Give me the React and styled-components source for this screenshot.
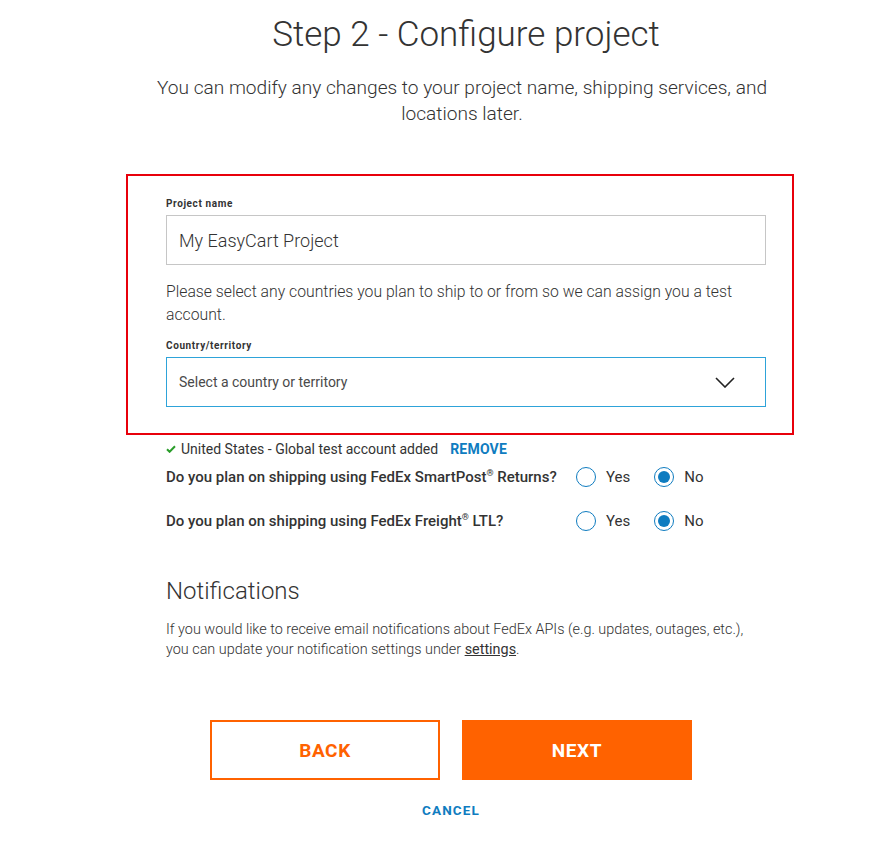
import React, { useState } from "react";
import styled, { createGlobalStyle } from "styled-components";

const GlobalStyle = createGlobalStyle`
  html, body {
    margin: 0;
    padding: 0;
    background: #ffffff;
  }
  body {
    font-family: "Roboto", "Liberation Sans", Arial, sans-serif;
    color: #333333;
  }
`;

// layout
const Page = styled.div`
  width: 879px;
  min-height: 844px;
  box-sizing: border-box;
  padding: 14px 0 30px 126px;
`;

const Header = styled.header`
  width: 680px;
  text-align: center;
`;

const Title = styled.h1`
  margin: 0;
  font-size: 35px;
  font-weight: 300;
  line-height: 42px;
  color: #333333;
`;

const Subtitle = styled.p`
  margin: 19px 0 0 16px;
  width: 640px;
  font-size: 19.1px;
  font-weight: 300;
  line-height: 26px;
  color: #333333;
`;

const Highlight = styled.section`
  margin-top: 47px;
  width: 668px;
  box-sizing: border-box;
  border: 2px solid #e8000b;
  padding: 22px 26px 26px 38px;
`;

const Body = styled.div`
  padding-left: 40px;
  width: 600px;
`;

const Label = styled.label`
  display: block;
  font-size: 10px;
  font-weight: 700;
  letter-spacing: 0.6px;
  line-height: 12px;
  color: #333333;
  margin-bottom: 5px;
`;

const TextInput = styled.input`
  display: block;
  width: 100%;
  height: 50px;
  box-sizing: border-box;
  border: 1px solid #c6c6c6;
  padding: 0 12px;
  font-family: "Roboto", sans-serif;
  font-size: 18px;
  font-weight: 300;
  color: #333333;
  outline: none;
`;

const HelpText = styled.p`
  margin: 15px 0 14px;
  font-size: 15.75px;
  font-weight: 300;
  line-height: 23px;
  color: #333333;
`;

const SelectBox = styled.div`
  display: flex;
  align-items: center;
  justify-content: space-between;
  height: 50px;
  box-sizing: border-box;
  border: 1px solid #2ea3d9;
  padding: 0 30px 0 12px;
  font-size: 14px;
  font-weight: 400;
  color: #4a4a4a;
`;

const Added = styled.div`
  display: flex;
  align-items: center;
  margin-top: 5px;
  font-size: 14px;
  font-weight: 400;
  color: #333333;
  line-height: 18px;
`;

const Remove = styled.a`
  margin-left: 12px;
  font-size: 14px;
  font-weight: 700;
  color: #0f7cc0;
  text-decoration: none;
  letter-spacing: 0.2px;
`;

const Question = styled.div`
  display: flex;
  align-items: center;
  margin-top: ${(p) => p.$top}px;
  height: 24px;
`;

const QuestionText = styled.div`
  width: 410px;
  font-size: 15px;
  font-weight: 500;
  color: #333333;
  sup {
    font-size: 9px;
    line-height: 0;
  }
`;

const RadioGroup = styled.div`
  display: flex;
  align-items: center;
  gap: 24px;
`;

const RadioOption = styled.label`
  display: flex;
  align-items: center;
  gap: 10px;
  font-size: 15px;
  font-weight: 400;
  color: #333333;
  cursor: pointer;
`;

const RadioDot = styled.span`
  width: 20px;
  height: 20px;
  box-sizing: border-box;
  border-radius: 50%;
  border: 1.5px solid #0f7cc0;
  display: flex;
  align-items: center;
  justify-content: center;
  &::after {
    content: "";
    width: 12px;
    height: 12px;
    border-radius: 50%;
    background: #0f7cc0;
    display: ${(p) => (p.$checked ? "block" : "none")};
  }
`;

const SectionTitle = styled.h2`
  margin: 43px 0 0;
  font-size: 24px;
  font-weight: 300;
  line-height: 30px;
  color: #333333;
`;

const Paragraph = styled.p`
  margin: 14px 0 0;
  width: 590px;
  font-size: 14.4px;
  font-weight: 300;
  line-height: 20px;
  color: #333333;
  a {
    color: #333333;
    font-weight: 400;
    text-decoration: underline;
  }
`;

const Actions = styled.div`
  display: flex;
  gap: 22px;
  margin: 60px 0 0 44px;
`;

const Button = styled.button`
  width: 230px;
  height: 60px;
  box-sizing: border-box;
  border: 2px solid #ff6200;
  background: ${(p) => (p.$primary ? "#ff6200" : "#ffffff")};
  color: ${(p) => (p.$primary ? "#ffffff" : "#ff6200")};
  font-family: "Roboto", sans-serif;
  font-size: 19px;
  font-weight: 700;
  letter-spacing: 0.6px;
  cursor: pointer;
`;

const Cancel = styled.a`
  display: block;
  width: 482px;
  margin: 22px 0 0 44px;
  text-align: center;
  font-size: 13.5px;
  font-weight: 700;
  letter-spacing: 1.1px;
  color: #0f7cc0;
  text-decoration: none;
`;

const Chevron = () => (
  <svg width="20" height="11" viewBox="0 0 20 11" fill="none">
    <path d="M1 1l9 9 9-9" stroke="#222" strokeWidth="1.6" />
  </svg>
);

const Check = () => (
  <svg width="10" height="8" viewBox="0 0 10 8" style={{ marginRight: 5 }}>
    <path d="M1 4.2l2.6 2.6L9 1.3" stroke="#2a9d2a" strokeWidth="2" fill="none" />
  </svg>
);

const Radio = ({ value, checked, onChange, children }) => (
  <RadioOption onClick={() => onChange(value)}>
    <RadioDot $checked={checked} />
    {children}
  </RadioOption>
);

const YesNo = ({ value, onChange }) => (
  <RadioGroup>
    <Radio value="yes" checked={value === "yes"} onChange={onChange}>
      Yes
    </Radio>
    <Radio value="no" checked={value === "no"} onChange={onChange}>
      No
    </Radio>
  </RadioGroup>
);

export default function App() {
  const [smartPost, setSmartPost] = useState("no");
  const [freight, setFreight] = useState("no");

  return (
    <Page>
      <GlobalStyle />
      <Header>
        <Title>Step 2 - Configure project</Title>
        <Subtitle>
          You can modify any changes to your project name, shipping services,
          and locations later.
        </Subtitle>
      </Header>

      <Highlight>
        <Label>Project name</Label>
        <TextInput defaultValue="My EasyCart Project" />
        <HelpText>
          Please select any countries you plan to ship to or from so we can
          assign you a test account.
        </HelpText>
        <Label>Country/territory</Label>
        <SelectBox>
          <span>Select a country or territory</span>
          <Chevron />
        </SelectBox>
      </Highlight>

      <Body>
        <Added>
          <Check />
          United States - Global test account added
          <Remove href="#">REMOVE</Remove>
        </Added>
        <Question $top={7}>
          <QuestionText>
            Do you plan on shipping using FedEx SmartPost<sup>®</sup> Returns?
          </QuestionText>
          <YesNo value={smartPost} onChange={setSmartPost} />
        </Question>
        <Question $top={20}>
          <QuestionText>
            Do you plan on shipping using FedEx Freight<sup>®</sup> LTL?
          </QuestionText>
          <YesNo value={freight} onChange={setFreight} />
        </Question>

        <SectionTitle>Notifications</SectionTitle>
        <Paragraph>
          If you would like to receive email notifications about FedEx APIs
          (e.g. updates, outages, etc.), you can update your notification
          settings under <a href="#">settings</a>.
        </Paragraph>

        <Actions>
          <Button>BACK</Button>
          <Button $primary>NEXT</Button>
        </Actions>
        <Cancel href="#">CANCEL</Cancel>
      </Body>
    </Page>
  );
}
